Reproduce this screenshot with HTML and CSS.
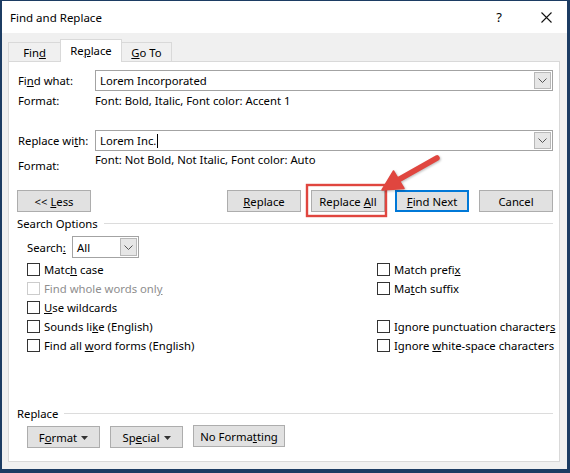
FILE: index.html
```html
<!DOCTYPE html>
<html>
<head>
<meta charset="utf-8">
<link rel="stylesheet" href="styles.css">
</head>
<body>
<div class="win">
  <div class="titlebar">
    <span class="title">Find and Replace</span>
    <span class="help">?</span>
    <span class="close"><svg width="11" height="11" viewBox="0 0 11 11"><path d="M0.5 0.5 L10.5 10.5 M10.5 0.5 L0.5 10.5" stroke="#111" stroke-width="1.1" fill="none"/></svg></span>
  </div>
  <div class="tabs">
    <div class="tab"><span>Fin<u>d</u></span></div>
    <div class="tab active"><span>Re<u>p</u>lace</span></div>
    <div class="tab"><span><u>G</u>o To</span></div>
  </div>
  <div class="panel">
    <div class="field-row first">
      <span class="lbl">Fi<u>n</u>d what:</span>
      <div class="combo"><span class="val">Lorem Incorporated</span><span class="combo-btn"><svg width="9" height="5" viewBox="0 0 9 5"><path d="M0.5 0.5 L4.5 4.5 L8.5 0.5" fill="none" stroke="#555" stroke-width="1"/></svg></span></div>
    </div>
    <div class="format-row">
      <span class="lbl">Format:</span>
      <span class="fval">Font: Bold, Italic, Font color: Accent 1</span>
    </div>
    <div class="field-row second">
      <span class="lbl">Replace wi<u>t</u>h:</span>
      <div class="combo"><span class="val"><span>Lorem Inc.</span><span class="caret"></span></span><span class="combo-btn"><svg width="9" height="5" viewBox="0 0 9 5"><path d="M0.5 0.5 L4.5 4.5 L8.5 0.5" fill="none" stroke="#555" stroke-width="1"/></svg></span></div>
    </div>
    <div class="format-row two">
      <span class="lbl low">Format:</span>
      <span class="fval high">Font: Not Bold, Not Italic, Font color: Auto</span>
    </div>
    <div class="btn-row">
      <button class="btn"><span>&lt;&lt; <u>L</u>ess</span></button>
      <span class="spacer"></span>
      <button class="btn"><span><u>R</u>eplace</span></button>
      <button class="btn"><span>Replace <u>A</u>ll</span></button>
      <button class="btn default"><span><u>F</u>ind Next</span></button>
      <button class="btn"><span>Cancel</span></button>
    </div>
    <div class="legend"><span>Search Options</span></div>
    <div class="search-row">
      <span class="slbl">Search<u>:</u></span>
      <div class="combo small"><span class="val">All</span><span class="combo-btn"><svg width="9" height="5" viewBox="0 0 9 5"><path d="M0.5 0.5 L4.5 4.5 L8.5 0.5" fill="none" stroke="#555" stroke-width="1"/></svg></span></div>
    </div>
    <div class="checks">
      <div class="chk"><span class="box"></span><span class="txt">Matc<u>h</u> case</span></div>
      <div class="chk"><span class="box"></span><span class="txt">Match prefi<u>x</u></span></div>
      <div class="chk disabled"><span class="box"></span><span class="txt">Find whole words onl<u>y</u></span></div>
      <div class="chk"><span class="box"></span><span class="txt">Ma<u>t</u>ch suffix</span></div>
      <div class="chk"><span class="box"></span><span class="txt"><u>U</u>se wildcards</span></div>
      <div class="chk empty"></div>
      <div class="chk"><span class="box"></span><span class="txt">Sounds li<u>k</u>e (English)</span></div>
      <div class="chk"><span class="box"></span><span class="txt">Ignore punctuation character<u>s</u></span></div>
      <div class="chk"><span class="box"></span><span class="txt">Find all <u>w</u>ord forms (English)</span></div>
      <div class="chk"><span class="box"></span><span class="txt">Ignore <u>w</u>hite-space characters</span></div>
    </div>
    <div class="legend second"><span>Replace</span></div>
    <div class="bottom-row">
      <button class="btn"><span>F<u>o</u>rmat</span><svg class="tri" width="7" height="4" viewBox="0 0 7 4"><path d="M0 0 H7 L3.5 4 Z" fill="#333"/></svg></button>
      <button class="btn"><span>Sp<u>e</u>cial</span><svg class="tri" width="7" height="4" viewBox="0 0 7 4"><path d="M0 0 H7 L3.5 4 Z" fill="#333"/></svg></button>
      <button class="btn wide"><span>No Forma<u>t</u>ting</span></button>
    </div>
  </div>
  <div class="foot"></div>
  <svg class="overlay" width="570" height="473" viewBox="0 0 570 473">
    <rect x="307" y="185" width="79" height="31" fill="none" stroke="#e0463f" stroke-width="2.4"/>
    <g class="arrow">
      <path d="M437 158 L398 180" stroke="#e0463f" stroke-width="5.5" stroke-linecap="round" fill="none"/>
      <path d="M382 190 L393.5 171 L404 188.5 Z" fill="#e0463f" stroke="#e0463f" stroke-width="1.5" stroke-linejoin="round"/>
    </g>
  </svg>
</div>
</body>
</html>
```
FILE: styles.css
```css
body {
  margin: 0;
  font-family: "Noto Sans", "Open Sans", sans-serif;
  font-size: 11.3px;
  color: #000;
}

u {
  text-underline-offset: 1px;
}

.win {
  width: 570px;
  height: 473px;
  box-sizing: border-box;
  border-style: solid;
  border-color: #1c3c63;
  border-width: 1px 3px 4px 2px;
  background: #f0f0f0;
  position: relative;
  display: flex;
  flex-direction: column;
}

.titlebar {
  height: 32px;
  background: #fff;
  display: flex;
  align-items: center;
  padding-left: 8px;
  padding-right: 11px;
}

.title {
  font-size: 11.5px;
}

.help {
  margin-left: auto;
  width: 20px;
  text-align: center;
  font-size: 13px;
}

.close {
  margin-left: 27px;
  width: 20px;
  height: 20px;
  display: flex;
  align-items: center;
  justify-content: center;
}

.tabs {
  height: 28px;
  display: flex;
  align-items: flex-end;
  padding-left: 6px;
}

.tab {
  height: 19px;
  box-sizing: border-box;
  border: 1px solid #d9d9d9;
  border-bottom: none;
  background: #f0f0f0;
  display: flex;
  align-items: center;
  justify-content: center;
  width: 53px;
  white-space: nowrap;
}

.tab + .tab {
  margin-left: -1px;
}

.tab.active {
  height: 23px;
  width: 62px;
  background: #fff;
  margin-bottom: -1px;
  position: relative;
  z-index: 1;
  padding-bottom: 2px;
}

.tab:last-child {
  width: 51px;
}

.panel {
  height: 401px;
  box-sizing: border-box;
  margin: 0 7px 0 6px;
  background: #fff;
  border: 1px solid #d9d9d9;
  padding: 0 6px 0 8px;
  display: flex;
  flex-direction: column;
}

.field-row {
  display: flex;
  align-items: center;
  height: 21px;
}

.field-row.first {
  margin-top: 8px;
}

.field-row.second {
  margin-top: 21px;
}

.lbl {
  width: 78px;
  flex: none;
  padding-left: 1px;
  box-sizing: border-box;
  white-space: nowrap;
}

.combo {
  flex: 1;
  height: 21px;
  box-sizing: border-box;
  border: 1px solid #a3a3a3;
  display: flex;
  align-items: center;
  background: #fff;
}

.combo .val {
  flex: 1;
  padding-left: 4px;
  display: flex;
  align-items: center;
  white-space: nowrap;
}

.caret {
  display: inline-block;
  width: 1px;
  height: 14px;
  background: #000;
  margin-left: 1px;
}

.combo-btn {
  width: 17px;
  height: 17px;
  margin-right: 1px;
  box-sizing: border-box;
  background: #e6e6e6;
  border: 1px solid #b8b8b8;
  display: flex;
  align-items: center;
  justify-content: center;
}

.format-row {
  height: 18px;
  display: flex;
  align-items: center;
  white-space: nowrap;
}

.format-row.two {
  height: 24px;
  align-items: stretch;
}

.format-row .low {
  align-self: flex-end;
  line-height: 18px;
}

.format-row .high {
  align-self: flex-start;
  line-height: 18px;
}

.btn-row {
  margin-top: 15px;
  height: 22px;
  display: flex;
  gap: 10px;
}

.spacer {
  flex: 1;
}

.btn {
  width: 74px;
  height: 22px;
  box-sizing: border-box;
  background: #e1e1e1;
  border: 1px solid #adadad;
  font-family: inherit;
  font-size: 11.3px;
  color: #000;
  padding: 0;
  display: flex;
  align-items: center;
  justify-content: center;
  gap: 4px;
  white-space: nowrap;
}

.btn.default {
  border: 2px solid #0078d7;
}

.legend {
  margin-top: 2px;
  height: 18px;
  display: flex;
  align-items: center;
  white-space: nowrap;
}

.legend::after {
  content: "";
  flex: 1;
  border-top: 1px solid #dcdcdc;
  margin-left: 6px;
}

.legend.second {
  margin-top: 49px;
}

.search-row {
  margin-top: 4px;
  height: 22px;
  padding-left: 10px;
  display: flex;
  align-items: center;
}

.slbl {
  width: 45px;
  white-space: nowrap;
}

.combo.small {
  flex: none;
  width: 67px;
  height: 22px;
}

.combo.small .combo-btn {
  height: 18px;
}

.checks {
  margin-top: 2px;
  padding-left: 10px;
  display: grid;
  grid-template-columns: 350px 1fr;
  grid-auto-rows: 19px;
}

.chk {
  display: flex;
  align-items: center;
  white-space: nowrap;
}

.box {
  width: 13px;
  height: 13px;
  flex: none;
  box-sizing: border-box;
  border: 1px solid #333;
  margin-right: 4px;
  background: #fff;
}

.chk.disabled {
  color: #8e8e8e;
}

.chk.disabled .box {
  border-color: #cccccc;
}

.bottom-row {
  margin-top: 4px;
  padding-left: 10px;
  display: flex;
  gap: 10px;
}

.bottom-row .btn {
  width: 73px;
}

.bottom-row .btn.wide {
  width: 92px;
  margin-top: -1px;
}

.tri {
  margin-top: 1px;
}

.foot {
  flex: 1;
}

.overlay {
  position: absolute;
  left: -2px;
  top: -1px;
  pointer-events: none;
}

.arrow {
  filter: drop-shadow(1px 1px 1px rgba(0, 0, 0, 0.25));
}
```
